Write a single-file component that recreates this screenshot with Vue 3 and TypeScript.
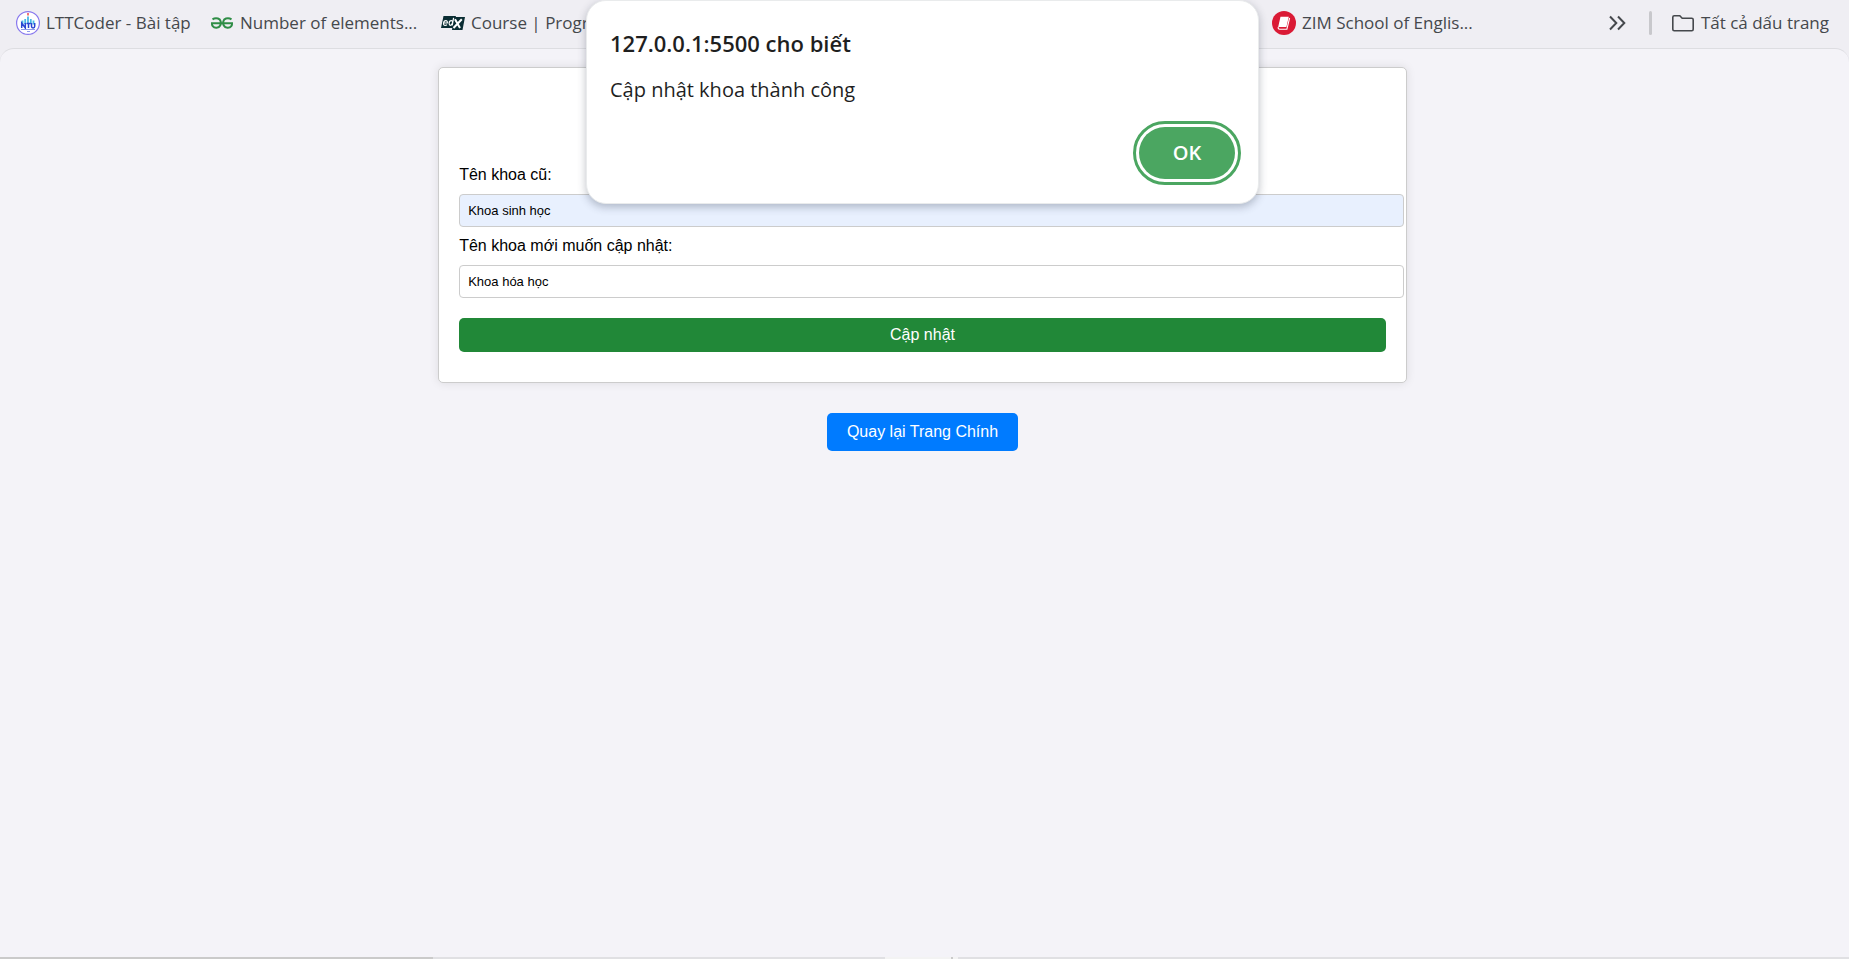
<script setup lang="ts">
import { ref } from 'vue'

const oldName = ref('Khoa sinh học')
const newName = ref('Khoa hóa học')
</script>

<template>
  <div class="window">
    <nav class="bookmarks" aria-label="Bookmarks">
      <a class="bookmark first" href="#">
        <svg width="24" height="24" viewBox="0 0 24 24" aria-hidden="true">
          <circle cx="12" cy="12" r="11.4" fill="#fff" stroke="#8878ee" stroke-width="1.2" />
          <path d="M12 2v2.600" stroke="#ef7777" stroke-width="2" />
          <path d="M12 5.500v7M9.200 8v5M14.800 8v5M6.500 9.500v4M17.500 9.500v4" stroke="#48b8e6" stroke-width="1.800" />
          <path d="M5.700 17v-5l3.600 5v-5M10.500 12.500h4M12.500 12.500V17M15.500 12v3.200q0 1.700 1.600 1.700t1.600-1.700V12" fill="none" stroke="#2946d2" stroke-width="1.500" />
          <path d="M5 18.500h14M11 20.500h3" stroke="#8e9bea" stroke-width="1" />
        </svg>
        <span>LTTCoder - Bài tập</span>
      </a>
      <a class="bookmark second" href="#">
        <svg width="24" height="24" viewBox="0 0 24 24" fill="none" stroke="#2f8d46" stroke-width="2" aria-hidden="true">
          <path d="M1 12.300h22M2.500 8.300Q5 6.700 8 7.500c3 1 3.500 4.500 2.200 7-1.500 3-5.800 3-7.500.7-.7-.9-.8-1.900-.7-2.900M21.500 8.300Q19 6.700 16 7.500c-3 1-3.500 4.500-2.200 7 1.500 3 5.800 3 7.500.7.700-.9.800-1.900.7-2.900" />
        </svg>
        <span>Number of elements...</span>
      </a>
      <a class="bookmark third" href="#">
        <svg width="24" height="24" viewBox="0 0 24 24" fill="none" aria-hidden="true">
          <path d="M2.500 5H15l-.3 1H24l-2.500 13H11l.3-2H0z" fill="#0b2d33" />
          <g stroke="#fff" stroke-width="1.200">
            <path d="M2.700 12h3.600q.4-2.300-1.500-2.300T2.500 12.400q-.1 2 1.600 2 1.200 0 1.900-.8" />
            <path d="M12.600 6.800 11.200 14.300M11.700 11.200q-.1-1.500-1.400-1.500-2 0-2.200 2.600 0 2 1.400 2 1.400 0 2.200-3.100" />
          </g>
          <path d="m14 8.200 5 8.800M20.800 8.200 12.500 17" stroke="#fff" stroke-width="2" />
        </svg>
        <span>Course | Program</span>
      </a>
      <a class="bookmark" href="#">
        <svg width="24" height="24" viewBox="0 0 24 24" aria-hidden="true">
          <circle cx="12" cy="12" r="12" fill="#da1a35" />
          <path d="M8.500 5.700h8.300L14.400 16H6.200z" fill="#fff" />
          <path d="M6.200 16q-.3 2.200 1.500 2.200h7.200L17.600 7" fill="none" stroke="#fff" stroke-width="1.100" />
        </svg>
        <span>ZIM School of Englis...</span>
      </a>
      <div class="overflow">
        <button class="more" type="button" aria-label="More bookmarks">
          <svg width="18" height="16" viewBox="0 0 18 16" fill="none" stroke="#45484c" stroke-width="2" aria-hidden="true">
            <path d="m2 1.500 6.300 6.500L2 14.500M10 1.500l6.300 6.500-6.300 6.500" />
          </svg>
        </button>
        <i class="divider"></i>
        <a class="bookmark" href="#">
          <svg width="24" height="24" viewBox="0 0 24 24" fill="none" stroke="#45484c" stroke-width="1.600" aria-hidden="true">
            <path d="M3.200 4.800h5.600l2.400 2.500h9.600q1.400 0 1.400 1.400v9.600q0 1.400-1.400 1.400H3.200q-1.400 0-1.400-1.400V6.200q0-1.400 1.400-1.400z" />
          </svg>
          <span>Tất cả dấu trang</span>
        </a>
      </div>
    </nav>

    <main class="page">
      <form class="card" @submit.prevent>
        <label for="old-name">Tên khoa cũ:</label>
        <input id="old-name" v-model="oldName" class="filled" type="text" />
        <label for="new-name">Tên khoa mới muốn cập nhật:</label>
        <input id="new-name" v-model="newName" type="text" />
        <button class="submit" type="submit">Cập nhật</button>
      </form>
      <button class="back" type="button">Quay lại Trang Chính</button>
    </main>

    <footer class="edge">
      <span class="thumb"></span>
      <span class="track"></span>
      <span class="tab"></span>
      <span class="track rest"></span>
    </footer>

    <div class="dialog" role="alertdialog" aria-labelledby="alert-title" aria-describedby="alert-text">
      <h1 id="alert-title">127.0.0.1:5500 cho biết</h1>
      <p id="alert-text">Cập nhật khoa thành công</p>
      <button class="ok" type="button">OK</button>
    </div>
  </div>
</template>

<style>
body {
  margin: 0;
  background: #efeef3;
}
</style>

<style scoped>
.window {
  position: relative;
  display: flex;
  flex-direction: column;
  min-height: 100vh;
  overflow: hidden;
  font-family: "Liberation Sans", Arial, sans-serif;
  font-size: 16px;
  color: #000;
}

.bookmarks {
  display: flex;
  align-items: center;
  box-sizing: border-box;
  height: 48px;
  padding: 0 20px 2px 16px;
  font-family: "Segoe UI", "Open Sans", "Noto Sans", sans-serif;
  font-size: 17px;
}

.bookmark {
  display: flex;
  flex: none;
  align-items: center;
  gap: 6px;
  color: #45484c;
  text-decoration: none;
  white-space: nowrap;
}

.bookmark svg {
  flex: none;
}

.bookmark span {
  padding-bottom: 2px;
}

.first {
  width: 194px;
}

.second {
  width: 231px;
}

.third {
  width: 831px;
}

.overflow {
  display: flex;
  align-items: center;
  margin-left: auto;
}

.more {
  display: flex;
  padding: 0;
  border: 0;
  background: none;
}

.divider {
  width: 3px;
  height: 24px;
  margin: 0 19px 0 23px;
  border-radius: 2px;
  background: #c8c8cc;
}

.page {
  display: flex;
  flex: 1;
  flex-direction: column;
  align-items: center;
  padding: 18px 4px 0 0;
  border-top: 1px solid #dddde1;
  border-radius: 14px 14px 0 0;
  background: #f4f3f8;
}

.card {
  box-sizing: border-box;
  width: 52.5%;
  padding: 97px 20px 30px;
  border: 1px solid #ccc;
  border-radius: 5px;
  background: #fff;
  box-shadow: 0 0 10px rgba(0, 0, 0, 0.1);
}

.card label {
  display: block;
  line-height: 20px;
}

.card input {
  display: block;
  box-sizing: content-box;
  width: 100%;
  height: 15px;
  margin: 9px 0;
  padding: 8px;
  border: 1px solid #ccc;
  border-radius: 4px;
  outline: 0;
  background: #fff;
  color: #000;
  font-family: inherit;
  font-size: 13px;
}

.card input.filled {
  background: #e8f0fe;
}

.submit,
.back {
  border: 0;
  border-radius: 5px;
  color: #fff;
  font-family: inherit;
  font-size: 16px;
}

.submit {
  display: block;
  width: 100%;
  height: 34px;
  margin-top: 20px;
  background: #218838;
}

.back {
  margin-top: 30px;
  padding: 10px 20px;
  background: #007bff;
}

.edge {
  display: flex;
  height: 2px;
  background: #f3f3f3;
}

.thumb {
  width: 433px;
  background: #cacaca;
}

.track {
  width: 452px;
  background: #e0e0e3;
}

.tab {
  width: 66px;
  border-right: 2px solid #cacaca;
}

.rest {
  flex: 1;
  margin-left: 5px;
}

.dialog {
  position: absolute;
  top: 0;
  left: 0;
  right: 4px;
  display: flex;
  flex-direction: column;
  box-sizing: border-box;
  width: 673px;
  height: 204px;
  margin: 0 auto;
  padding: 25px 23px 24px;
  border: 1px solid #e9ebec;
  border-radius: 20px;
  background: #fff;
  box-shadow: 0 3px 8px rgba(40, 50, 70, 0.3);
  color: #1f1f1f;
  font-family: "Segoe UI", "Open Sans", "Noto Sans", sans-serif;
}

.dialog h1 {
  margin: 0;
  font-size: 22px;
  font-weight: 600;
  line-height: 34px;
}

.dialog p {
  margin: 15px 0 0;
  font-size: 20px;
  line-height: 30px;
}

.ok {
  align-self: flex-end;
  width: 96px;
  height: 52px;
  margin-top: auto;
  padding: 0 0 2px;
  border: 0;
  border-radius: 26px;
  outline: 3px solid #4ba661;
  outline-offset: 3px;
  background: #4ba661;
  color: #fff;
  font-family: inherit;
  font-size: 20px;
  font-weight: 600;
}
</style>
